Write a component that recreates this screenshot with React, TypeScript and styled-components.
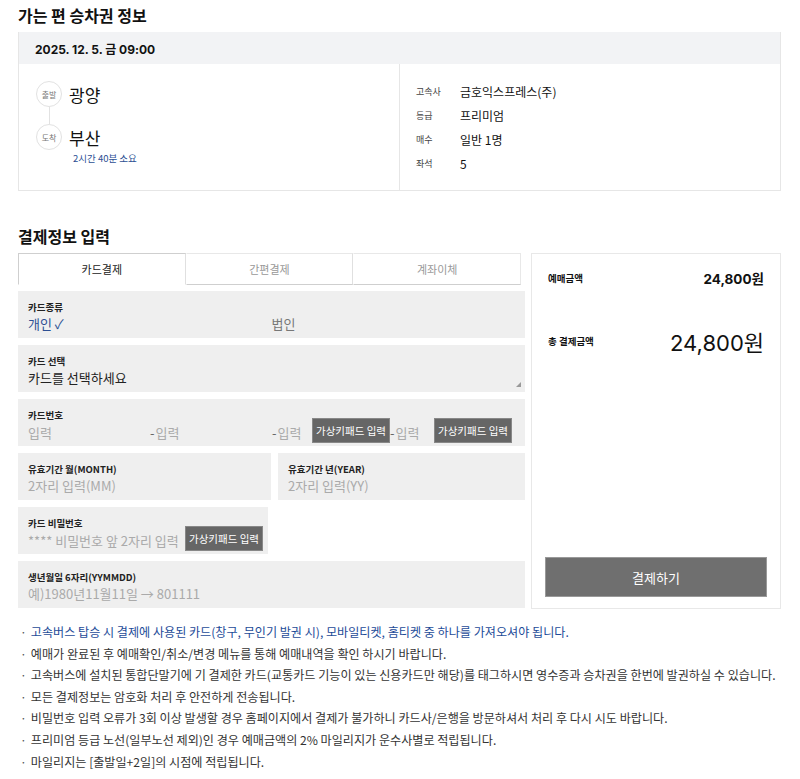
import styled, { createGlobalStyle } from "styled-components";

const GlobalStyle = createGlobalStyle`
  body {
    margin: 0;
    background: #fff;
    font-family: "Noto Sans CJK KR", "Noto Sans", sans-serif;
    color: #222;
  }
`;

const Page = styled.div`
  width: 800px;
  padding: 4px 19px 0 18px;
  box-sizing: border-box;
`;

const SectionTitle = styled.h2`
  margin: 0;
  font-size: 16px;
  font-weight: 700;
  line-height: 22px;
  color: #111;
  padding-bottom: 6px;
`;

const TicketBox = styled.div`
  border: 1px solid #e6e6e6;
  border-top: none;
`;

const TicketHeader = styled.div`
  height: 32px;
  background: #f2f3f5;
  display: flex;
  align-items: center;
  padding-left: 16px;
  font-size: 12px;
  font-weight: 700;
  color: #111;
  font-family: "Inter", "Noto Sans CJK KR", sans-serif;
`;

const TicketBody = styled.div`
  display: grid;
  grid-template-columns: 381px 1fr;
  height: 126px;
`;

const RouteCol = styled.div`
  border-right: 1px solid #e6e6e6;
  padding: 17px 0 0 17px;
`;

const Stop = styled.div`
  display: flex;
  align-items: center;
  gap: 7px;
`;

const Circle = styled.div`
  width: 24px;
  height: 24px;
  border: 1px solid #e2e2e2;
  border-radius: 50%;
  display: flex;
  align-items: center;
  justify-content: center;
  font-size: 8px;
  color: #777;
  background: #fff;
`;

const City = styled.span`
  font-size: 17px;
  color: #111;
`;

const Connector = styled.div`
  width: 1px;
  height: 17px;
  background: #e2e2e2;
  margin-left: 13px;
`;

const Duration = styled.div`
  font-size: 9.5px;
  color: #2c4f93;
  margin: 1px 0 0 37px;
`;

const InfoCol = styled.div`
  padding: 17px 0 0 16px;
  display: flex;
  flex-direction: column;
  gap: 4px;
`;

const InfoRow = styled.div`
  display: flex;
  align-items: center;
  height: 20px;
`;

const InfoLabel = styled.span`
  width: 44px;
  font-size: 9px;
  color: #444;
`;

const InfoValue = styled.span`
  font-size: 12px;
  color: #111;
`;

const PaySection = styled.div`
  margin-top: 34px;
`;

const PayGrid = styled.div`
  display: grid;
  grid-template-columns: 507px 250px;
  gap: 6px;
`;

const FormCol = styled.div`
  display: flex;
  flex-direction: column;
  gap: 7px;
`;

const Tabs = styled.div`
  display: grid;
  grid-template-columns: repeat(3, 1fr);
  width: 503px;
  height: 32px;
  margin-bottom: -1px;
`;

const Tab = styled.div<{ $active?: boolean }>`
  display: flex;
  align-items: center;
  justify-content: center;
  font-size: 11px;
  color: ${(p) => (p.$active ? "#222" : "#999")};
  border: 1px solid #e0e0e0;
  border-top-color: ${(p) => (p.$active ? "#cfcfcf" : "#e8e8e8")};
  border-left-color: ${(p) => (p.$active ? "#cfcfcf" : "transparent")};
  border-bottom-color: ${(p) => (p.$active ? "transparent" : "#cfcfcf")};
  &:last-child {
    border-right-color: #e8e8e8;
  }
`;

const Field = styled.div<{ $width?: number }>`
  position: relative;
  background: #efefef;
  height: 47px;
  box-sizing: border-box;
  padding: 9px 10px 0;
  width: ${(p) => (p.$width ? `${p.$width}px` : "100%")};
`;

const FieldLabel = styled.div`
  font-size: 9.5px;
  font-weight: 700;
  color: #222;
  line-height: 14px;
`;

const FieldValue = styled.div<{ $muted?: boolean }>`
  font-size: 13px;
  line-height: 20px;
  color: ${(p) => (p.$muted ? "#aaa" : "#222")};
  display: flex;
  align-items: center;
  white-space: nowrap;
`;

const SelectField = styled(Field)`
  &::after {
    content: "";
    position: absolute;
    right: 4px;
    bottom: 5px;
    border-left: 5px solid transparent;
    border-bottom: 5px solid #999;
  }
`;

const TypeOption = styled.span<{ $selected?: boolean }>`
  width: 244px;
  color: ${(p) => (p.$selected ? "#2c4f93" : "#777")};
`;

const Segment = styled.span<{ $w: number }>`
  width: ${(p) => p.$w}px;
  flex-shrink: 0;
  color: #aaa;
`;

const Dash = styled.span`
  color: #666;
  margin-right: 1px;
`;

const KeypadButton = styled.button`
  flex-shrink: 0;
  white-space: nowrap;
  width: 78px;
  height: 25px;
  padding: 0;
  border: 1px solid #888;
  background: #666;
  color: #fff;
  font-family: inherit;
  font-size: 10.5px;
  margin-top: -4px;
`;

const TwoCols = styled.div`
  display: grid;
  grid-template-columns: 253px 247px;
  gap: 7px;
`;

const SummaryBox = styled.div`
  margin-top: 0;
  border: 1px solid #e8e8e8;
  height: 356px;
  box-sizing: border-box;
  padding: 0 13px 11px;
  display: flex;
  flex-direction: column;
`;

const SumRow = styled.div<{ $top: number; $height: number }>`
  display: flex;
  justify-content: space-between;
  align-items: center;
  margin-top: ${(p) => p.$top}px;
  height: ${(p) => p.$height}px;
  padding: 0 3px;
`;

const SumLabel = styled.span`
  font-size: 9.5px;
  font-weight: 700;
  color: #111;
`;

const SumAmount = styled.span<{ $big?: boolean }>`
  font-size: ${(p) => (p.$big ? "22px" : "13.5px")};
  font-weight: ${(p) => (p.$big ? 400 : 700)};
  color: #111;
  font-family: "Inter", "Noto Sans CJK KR", sans-serif;
`;

const PayButton = styled.button`
  margin-top: auto;
  height: 40px;
  border: 1px solid #999;
  background: #6f6f6f;
  color: #fff;
  font-family: inherit;
  font-size: 13px;
`;

const Notes = styled.ul`
  list-style: none;
  margin: 12px 0 0;
  padding: 0 0 0 2px;
`;

const Note = styled.li<{ $blue?: boolean }>`
  font-size: 12.1px;
  line-height: 21.6px;
  color: ${(p) => (p.$blue ? "#1d4b98" : "#333")};
  white-space: nowrap;
  &::before {
    content: "·";
    color: #555;
    margin-right: 4px;
  }
`;

const notes = [
  "고속버스 탑승 시 결제에 사용된 카드(창구, 무인기 발권 시), 모바일티켓, 홈티켓 중 하나를 가져오셔야 됩니다.",
  "예매가 완료된 후 예매확인/취소/변경 메뉴를 통해 예매내역을 확인 하시기 바랍니다.",
  "고속버스에 설치된 통합단말기에 기 결제한 카드(교통카드 기능이 있는 신용카드만 해당)를 태그하시면 영수증과 승차권을 한번에 발권하실 수 있습니다.",
  "모든 결제정보는 암호화 처리 후 안전하게 전송됩니다.",
  "비밀번호 입력 오류가 3회 이상 발생할 경우 홈페이지에서 결제가 불가하니 카드사/은행을 방문하셔서 처리 후 다시 시도 바랍니다.",
  "프리미엄 등급 노선(일부노선 제외)인 경우 예매금액의 2% 마일리지가 운수사별로 적립됩니다.",
  "마일리지는 [출발일+2일]의 시점에 적립됩니다.",
];

const info = [
  ["고속사", "금호익스프레스(주)"],
  ["등급", "프리미엄"],
  ["매수", "일반 1명"],
  ["좌석", "5"],
];

export default function App() {
  return (
    <Page>
      <GlobalStyle />
      <SectionTitle>가는 편 승차권 정보</SectionTitle>
      <TicketBox>
        <TicketHeader>2025. 12. 5. 금 09:00</TicketHeader>
        <TicketBody>
          <RouteCol>
            <Stop>
              <Circle>출발</Circle>
              <City>광양</City>
            </Stop>
            <Connector />
            <Stop>
              <Circle>도착</Circle>
              <City>부산</City>
            </Stop>
            <Duration>2시간 40분 소요</Duration>
          </RouteCol>
          <InfoCol>
            {info.map(([k, v]) => (
              <InfoRow key={k}>
                <InfoLabel>{k}</InfoLabel>
                <InfoValue>{v}</InfoValue>
              </InfoRow>
            ))}
          </InfoCol>
        </TicketBody>
      </TicketBox>

      <PaySection>
        <SectionTitle>결제정보 입력</SectionTitle>
        <PayGrid>
          <FormCol>
            <Tabs>
              <Tab $active>카드결제</Tab>
              <Tab>간편결제</Tab>
              <Tab>계좌이체</Tab>
            </Tabs>
            <Field>
              <FieldLabel>카드종류</FieldLabel>
              <FieldValue>
                <TypeOption $selected>개인 ✓</TypeOption>
                <TypeOption>법인</TypeOption>
              </FieldValue>
            </Field>
            <SelectField>
              <FieldLabel>카드 선택</FieldLabel>
              <FieldValue>카드를 선택하세요</FieldValue>
            </SelectField>
            <Field>
              <FieldLabel>카드번호</FieldLabel>
              <FieldValue $muted>
                <Segment $w={122}>입력</Segment>
                <Segment $w={122}>
                  <Dash>-</Dash>입력
                </Segment>
                <Segment $w={40}>
                  <Dash>-</Dash>입력
                </Segment>
                <KeypadButton>가상키패드 입력</KeypadButton>
                <Segment $w={44}>
                  <Dash>-</Dash>입력
                </Segment>
                <KeypadButton>가상키패드 입력</KeypadButton>
              </FieldValue>
            </Field>
            <TwoCols>
              <Field>
                <FieldLabel>유효기간 월(MONTH)</FieldLabel>
                <FieldValue $muted>2자리 입력(MM)</FieldValue>
              </Field>
              <Field>
                <FieldLabel>유효기간 년(YEAR)</FieldLabel>
                <FieldValue $muted>2자리 입력(YY)</FieldValue>
              </Field>
            </TwoCols>
            <Field $width={250}>
              <FieldLabel>카드 비밀번호</FieldLabel>
              <FieldValue $muted>
                <Segment $w={157}>**** 비밀번호 앞 2자리 입력</Segment>
                <KeypadButton>가상키패드 입력</KeypadButton>
              </FieldValue>
            </Field>
            <Field>
              <FieldLabel>생년월일 6자리(YYMMDD)</FieldLabel>
              <FieldValue $muted>예)1980년11월11일 → 801111</FieldValue>
            </Field>
          </FormCol>
          <SummaryBox>
            <SumRow $top={14} $height={20}>
              <SumLabel>예매금액</SumLabel>
              <SumAmount>24,800원</SumAmount>
            </SumRow>
            <SumRow $top={38} $height={30}>
              <SumLabel>총 결제금액</SumLabel>
              <SumAmount $big>24,800원</SumAmount>
            </SumRow>
            <PayButton>결제하기</PayButton>
          </SummaryBox>
        </PayGrid>
      </PaySection>

      <Notes>
        {notes.map((n, i) => (
          <Note key={i} $blue={i === 0}>
            {n}
          </Note>
        ))}
      </Notes>
    </Page>
  );
}
